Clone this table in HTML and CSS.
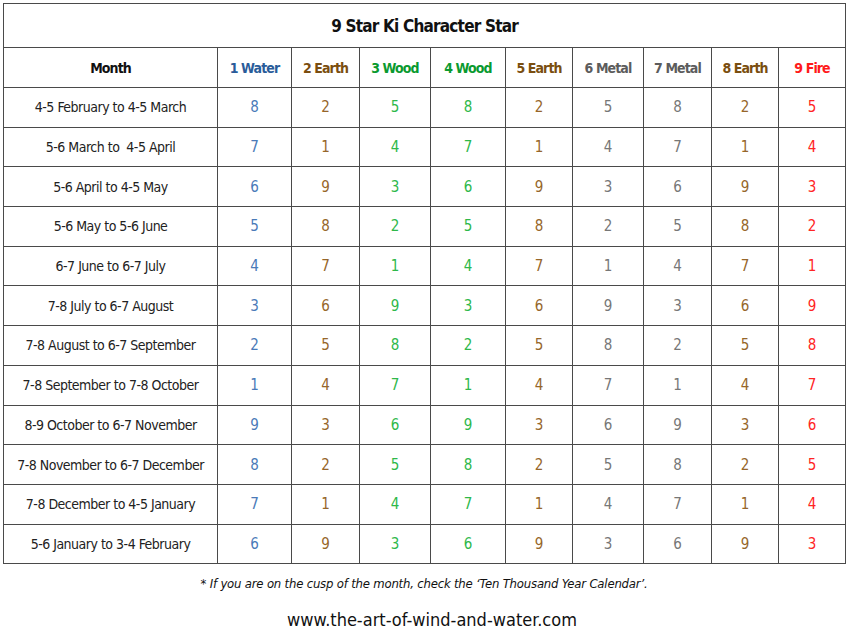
FILE: index.html
```html
<!DOCTYPE html>
<html>
<head>
<meta charset="utf-8">
<link rel="stylesheet" href="styles.css">
</head>
<body>
<div class="page">
  <table class="chart">
    <colgroup>
      <col class="c-month"><col class="c1"><col class="c2"><col class="c3"><col class="c4"><col class="c5"><col class="c6"><col class="c7"><col class="c8"><col class="c9">
    </colgroup>
    <thead>
      <tr class="title-row"><th colspan="10">9 Star Ki Character Star</th></tr>
      <tr class="head-row">
        <th class="month">Month</th>
        <th class="water">1 Water</th>
        <th class="earth">2 Earth</th>
        <th class="wood">3 Wood</th>
        <th class="wood">4 Wood</th>
        <th class="earth">5 Earth</th>
        <th class="metal">6 Metal</th>
        <th class="metal">7 Metal</th>
        <th class="earth">8 Earth</th>
        <th class="fire">9 Fire</th>
      </tr>
    </thead>
    <tbody>
      <tr><td class="month">4-5 February to 4-5 March</td><td class="water">8</td><td class="earth">2</td><td class="wood">5</td><td class="wood">8</td><td class="earth">2</td><td class="metal">5</td><td class="metal">8</td><td class="earth">2</td><td class="fire">5</td></tr>
      <tr><td class="month">5-6 March to &nbsp;4-5 April</td><td class="water">7</td><td class="earth">1</td><td class="wood">4</td><td class="wood">7</td><td class="earth">1</td><td class="metal">4</td><td class="metal">7</td><td class="earth">1</td><td class="fire">4</td></tr>
      <tr><td class="month">5-6 April to 4-5 May</td><td class="water">6</td><td class="earth">9</td><td class="wood">3</td><td class="wood">6</td><td class="earth">9</td><td class="metal">3</td><td class="metal">6</td><td class="earth">9</td><td class="fire">3</td></tr>
      <tr><td class="month">5-6 May to 5-6 June</td><td class="water">5</td><td class="earth">8</td><td class="wood">2</td><td class="wood">5</td><td class="earth">8</td><td class="metal">2</td><td class="metal">5</td><td class="earth">8</td><td class="fire">2</td></tr>
      <tr><td class="month">6-7 June to 6-7 July</td><td class="water">4</td><td class="earth">7</td><td class="wood">1</td><td class="wood">4</td><td class="earth">7</td><td class="metal">1</td><td class="metal">4</td><td class="earth">7</td><td class="fire">1</td></tr>
      <tr><td class="month">7-8 July to 6-7 August</td><td class="water">3</td><td class="earth">6</td><td class="wood">9</td><td class="wood">3</td><td class="earth">6</td><td class="metal">9</td><td class="metal">3</td><td class="earth">6</td><td class="fire">9</td></tr>
      <tr><td class="month">7-8 August to 6-7 September</td><td class="water">2</td><td class="earth">5</td><td class="wood">8</td><td class="wood">2</td><td class="earth">5</td><td class="metal">8</td><td class="metal">2</td><td class="earth">5</td><td class="fire">8</td></tr>
      <tr><td class="month">7-8 September to 7-8 October</td><td class="water">1</td><td class="earth">4</td><td class="wood">7</td><td class="wood">1</td><td class="earth">4</td><td class="metal">7</td><td class="metal">1</td><td class="earth">4</td><td class="fire">7</td></tr>
      <tr><td class="month">8-9 October to 6-7 November</td><td class="water">9</td><td class="earth">3</td><td class="wood">6</td><td class="wood">9</td><td class="earth">3</td><td class="metal">6</td><td class="metal">9</td><td class="earth">3</td><td class="fire">6</td></tr>
      <tr><td class="month">7-8 November to 6-7 December</td><td class="water">8</td><td class="earth">2</td><td class="wood">5</td><td class="wood">8</td><td class="earth">2</td><td class="metal">5</td><td class="metal">8</td><td class="earth">2</td><td class="fire">5</td></tr>
      <tr><td class="month">7-8 December to 4-5 January</td><td class="water">7</td><td class="earth">1</td><td class="wood">4</td><td class="wood">7</td><td class="earth">1</td><td class="metal">4</td><td class="metal">7</td><td class="earth">1</td><td class="fire">4</td></tr>
      <tr><td class="month">5-6 January to 3-4 February</td><td class="water">6</td><td class="earth">9</td><td class="wood">3</td><td class="wood">6</td><td class="earth">9</td><td class="metal">3</td><td class="metal">6</td><td class="earth">9</td><td class="fire">3</td></tr>
    </tbody>
  </table>
  <p class="note">* If you are on the cusp of the month, check the ‘Ten Thousand Year Calendar’.</p>
  <p class="site">www.the-art-of-wind-and-water.com</p>
</div>
</body>
</html>
```
FILE: styles.css
```css
html, body {
  margin: 0;
  padding: 0;
  background: #ffffff;
}
body {
  font-family: "DejaVu Sans Condensed", "Liberation Sans", sans-serif;
  color: #1a1a1a;
}
.page {
  width: 850px;
  height: 638px;
  padding: 3px 0 0 3px;
  box-sizing: border-box;
}
.chart {
  border-collapse: collapse;
  table-layout: fixed;
  width: 842px;
}
.c-month { width: 214px; }
.c1 { width: 74px; }
.c2 { width: 68px; }
.c3 { width: 71px; }
.c4 { width: 75px; }
.c5 { width: 67px; }
.c6 { width: 71px; }
.c7 { width: 68px; }
.c8 { width: 67px; }
.c9 { width: 67px; }
.chart th, .chart td {
  border: 1px solid #4a4a4a;
  text-align: center;
  padding: 0;
  white-space: nowrap;
  overflow: hidden;
}
.title-row th {
  height: 43px;
  font-size: 17px;
  letter-spacing: -0.8px;
  font-weight: bold;
  color: #111;
}
.head-row th {
  height: 39px;
  font-size: 14px;
  letter-spacing: -0.9px;
  font-weight: bold;
}
.head-row th.month { color: #111; }
.chart td {
  height: 38.7px;
  font-size: 15px;
}
.chart td.month {
  color: #222;
  font-size: 14px;
  letter-spacing: -0.5px;
}
.head-row .water { color: #2a5c9a; }
.head-row .earth { color: #7a4e10; }
.head-row .wood { color: #0a9a30; }
.head-row .metal { color: #5c5c5c; }
.head-row .fire { color: #ff1a1a; }
td.water { color: #4a7ab8; }
td.earth { color: #96662a; }
td.wood { color: #2eb84a; }
td.metal { color: #777; }
td.fire { color: #ff2424; }
.note {
  margin: 12px 0 0 0;
  width: 842px;
  text-align: center;
  font-style: italic;
  font-size: 13px;
  letter-spacing: -0.2px;
  color: #111;
}
.site {
  margin: 18px 0 0 0;
  width: 842px;
  padding-left: 16px;
  box-sizing: border-box;
  text-align: center;
  font-size: 18px;
  color: #111;
}
```
